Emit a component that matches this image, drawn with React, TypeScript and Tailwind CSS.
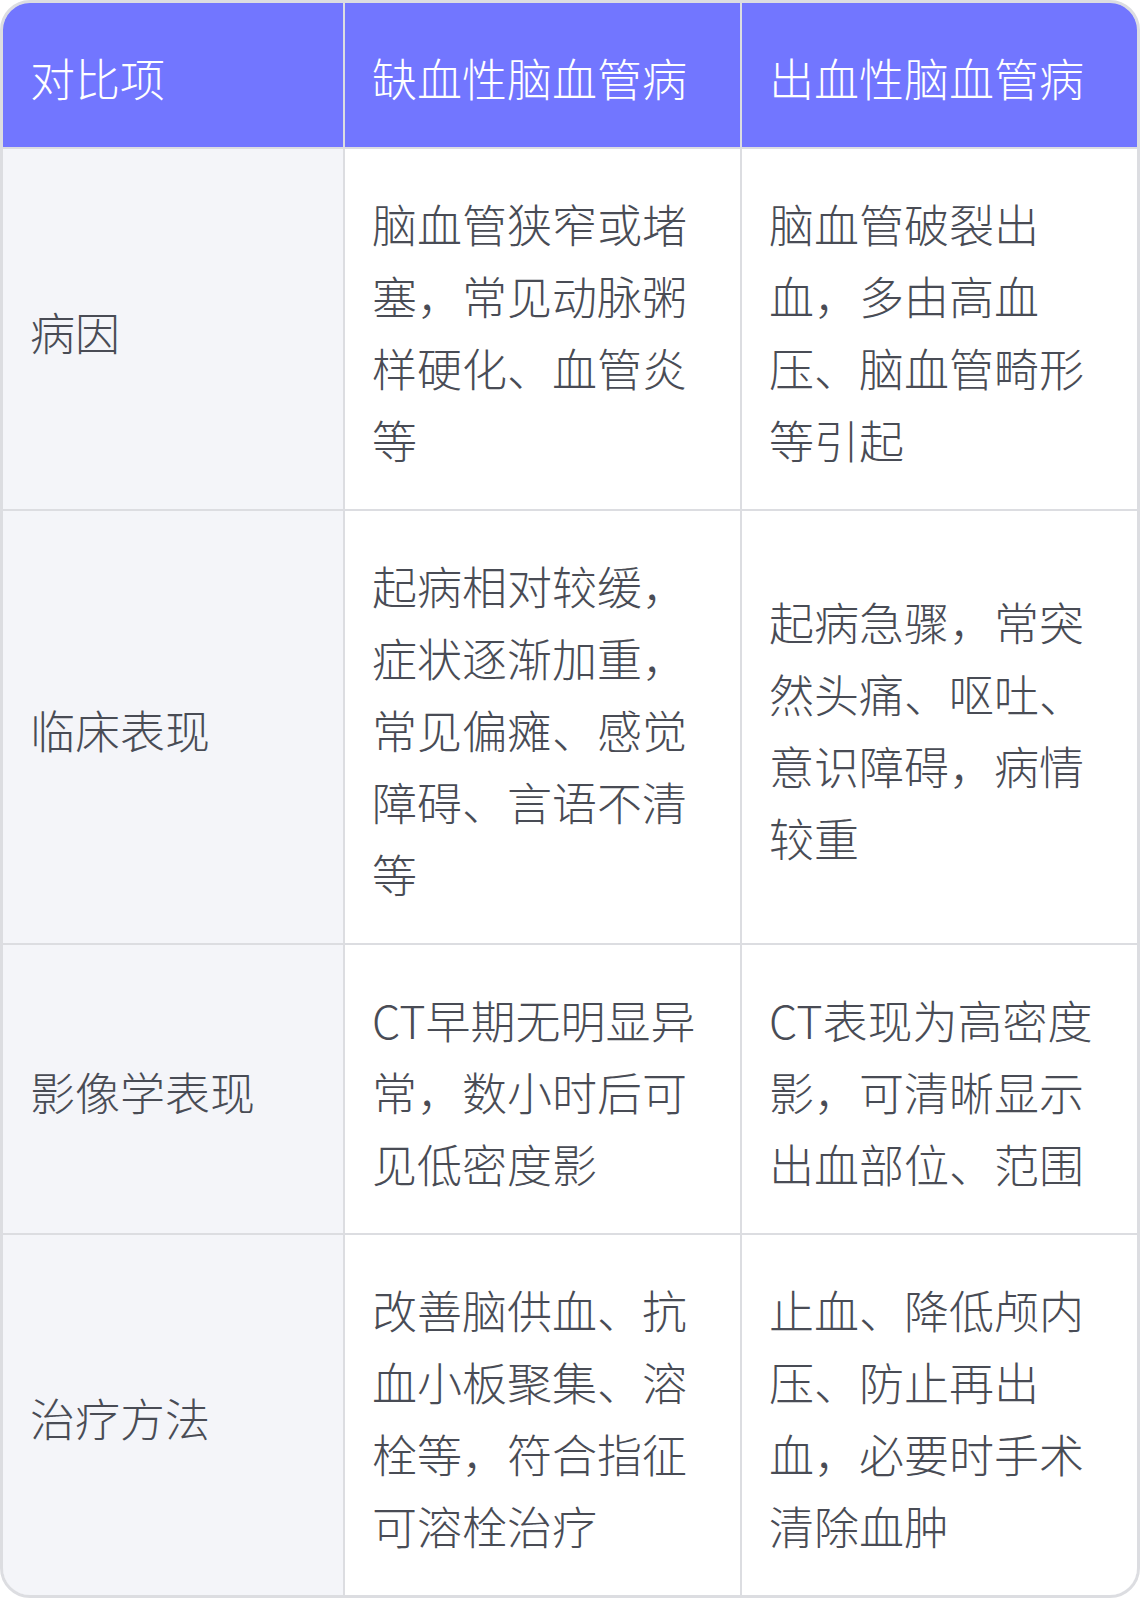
import React from "react";

const rows: [string, string, string][] = [
  ["病因", "脑血管狭窄或堵塞，常见动脉粥样硬化、血管炎等", "脑血管破裂出血，多由高血压、脑血管畸形等引起"],
  ["临床表现", "起病相对较缓，症状逐渐加重，常见偏瘫、感觉障碍、言语不清等", "起病急骤，常突然头痛、呕吐、意识障碍，病情较重"],
  ["影像学表现", "CT早期无明显异常，数小时后可见低密度影", "CT表现为高密度影，可清晰显示出血部位、范围"],
  ["治疗方法", "改善脑供血、抗血小板聚集、溶栓等，符合指征可溶栓治疗", "止血、降低颅内压、防止再出血，必要时手术清除血肿"],
];

export default function App() {
  return (
    <div
      className="w-[1140px] bg-white"
      style={{ fontFamily: '"Noto Sans CJK SC", "Noto Sans", sans-serif' }}
    >
      <div className="border-[3px] border-[#dcdde1] rounded-[30px] overflow-hidden">
        <div className="grid grid-cols-[340px_395px_395px] gap-[2px] bg-[#dcdde1] text-[45px] leading-[72px] font-light">
          <div className="bg-[#7276ff] text-white px-[27px] pt-[39px] pb-[33px]">对比项</div>
          <div className="bg-[#7276ff] text-white px-[27px] pt-[39px] pb-[33px]">缺血性脑血管病</div>
          <div className="bg-[#7276ff] text-white px-[27px] pt-[39px] pb-[33px]">出血性脑血管病</div>
          {rows.map((r, i) => (
            <React.Fragment key={i}>
              <div className="bg-[#f4f5f9] text-[#494c55] px-[27px] pt-[39px] pb-[33px] flex items-center">
                {r[0]}
              </div>
              <div className="bg-white text-[#494c55] px-[27px] pt-[39px] pb-[33px] flex items-center">
                <span>{r[1]}</span>
              </div>
              <div className="bg-white text-[#494c55] px-[27px] pt-[39px] pb-[33px] flex items-center">
                <span>{r[2]}</span>
              </div>
            </React.Fragment>
          ))}
        </div>
      </div>
    </div>
  );
}
